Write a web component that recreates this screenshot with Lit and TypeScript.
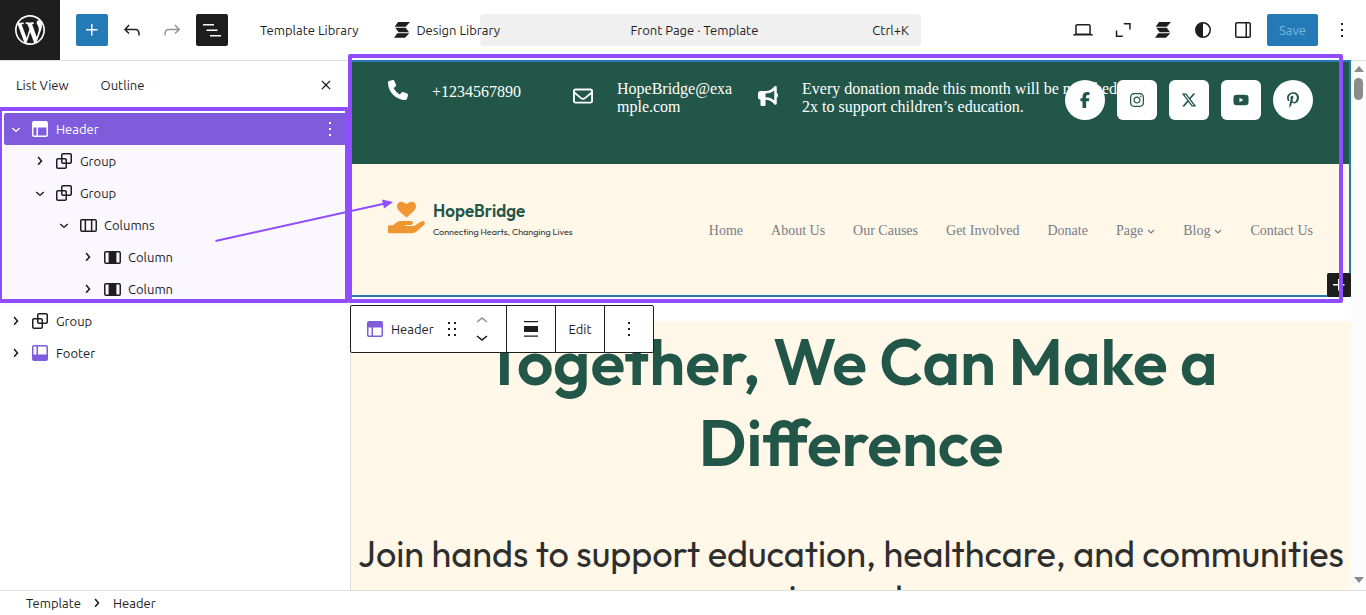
import { LitElement, html, css, svg, nothing } from "lit";
import { customElement } from "lit/decorators.js";

const icon = (body: unknown, size = 24, box = "0 0 24 24") =>
  html`<svg width=${size} height=${size} viewBox=${box} fill="currentColor" aria-hidden="true">${body}</svg>`;

const I = {
  plus: svg`<path d="M11 12.5V17.5H12.5V12.5H17.5V11H12.5V6H11V11H6V12.5H11Z"/>`,
  undo: svg`<path d="M18.3 11.7c-.6-.6-1.4-.9-2.3-.9H6.7l2.9-3.3-1.1-1-4.5 5L8.500 16l1-1-2.700-2.700H16c.5 0 .9.200 1.300.5 1 1 1 3.400 1 4.500v.300h1.500v-.200c0-1.500 0-4.300-1.500-5.700z"/>`,
  redo: svg`<path d="M15.600 6.500l-1.100 1 2.900 3.300H8c-.9 0-1.700.3-2.300.9-1.400 1.500-1.400 4.200-1.400 5.600v.2h1.500v-.300c0-1.100 0-3.500 1-4.500.3-.3.7-.5 1.300-.5h9.200L14.500 15l1.100 1.100 4.600-4.600-4.600-5z"/>`,
  list: svg`<path d="M3 6h11v1.500H3V6Zm3.500 5.500h11V13h-11v-1.500ZM21 17H10v1.500h11V17Z"/>`,
  spectra: svg`<path d="M8 4h12l-4.300 4.700H4.700ZM5.300 9.700h10.400L19 14.300H8.700ZM7.300 15.300h12L15 19.700H4Z"/>`,
  laptop: svg`<path d="M20.500 16h-.7V8c0-1.100-.9-2-2-2H6.200c-1.100 0-2 .9-2 2v8h-.7c-.8 0-1.500.7-1.500 1.500h20c0-.8-.7-1.500-1.500-1.500zM5.700 8c0-.3.2-.5.5-.5h11.600c.3 0 .5.2.5.5v7.600H5.700V8z"/>`,
  expand: svg`<path d="M12.800 5H19.700V11.600H18.200V6.500H12.800ZM4.800 12.400H6.300V17.400H11.800V18.900H4.800Z"/>`,
  contrast: svg`<path fill-rule="evenodd" d="M20 12a8 8 0 1 1-16 0 8 8 0 0 1 16 0Zm-1.500 0A6.500 6.500 0 0 0 12 5.500v13a6.500 6.500 0 0 0 6.500-6.500Z"/>`,
  sidebar: svg`<path fill-rule="evenodd" d="M18 4H6c-1.100 0-2 .9-2 2v12c0 1.100.9 2 2 2h12c1.100 0 2-.9 2-2V6c0-1.100-.9-2-2-2zM14.500 18.500H6c-.3 0-.5-.2-.5-.5V6c0-.3.2-.5.5-.5h8.500v13zm4-.5c0 .3-.2.5-.5.500h-2v-13h2c.3 0 .5.2.5.5v12z"/>`,
  more: svg`<path d="M13 19h-2v-2h2v2zm0-6h-2v-2h2v2zm0-6h-2V5h2v2z"/>`,
  close: svg`<path d="m13.060 12 4.470-4.470-1.060-1.060L12 10.940 7.530 6.470 6.470 7.530 10.940 12l-4.470 4.470 1.060 1.060L12 13.060l4.470 4.470 1.060-1.060L13.060 12Z"/>`,
  header: svg`<path fill-rule="evenodd" d="M18.500 10.500H10v8h8a.5.5 0 0 0 .5-.5v-7.500zm-10 0h-3V18a.5.5 0 0 0 .5.5h2.500v-8zM6 4h12a2 2 0 0 1 2 2v12a2 2 0 0 1-2 2H6a2 2 0 0 1-2-2V6a2 2 0 0 1 2-2z"/>`,
  footer: svg`<path fill-rule="evenodd" d="M18 5.500h-8v8h8.500V6a.5.5 0 0 0-.5-.5zm-9.500 8h-3V6a.5.5 0 0 1 .5-.5h2.500v8zM6 4h12a2 2 0 0 1 2 2v12a2 2 0 0 1-2 2H6a2 2 0 0 1-2-2V6a2 2 0 0 1 2-2z"/>`,
  group: svg`<path fill-rule="evenodd" d="M18 4h-7c-1.100 0-2 .9-2 2v3H6c-1.100 0-2 .9-2 2v7c0 1.100.9 2 2 2h7c1.100 0 2-.9 2-2v-3h3c1.100 0 2-.9 2-2V6c0-1.100-.9-2-2-2zm-4.500 14c0 .3-.2.5-.5.5H6c-.3 0-.5-.2-.5-.5v-7c0-.3.2-.5.5-.5h3V13c0 1.100.9 2 2 2h2.500v3zm0-4.500H11c-.3 0-.5-.2-.5-.5v-2.500H13c.3 0 .5.2.5.5v2.500zm5-.5c0 .3-.2.5-.5.5h-3V11c0-1.100-.9-2-2-2h-2.500V6c0-.3.2-.5.5-.5h7c.3 0 .5.2.5.5v7z"/>`,
  columns: svg`<path fill-rule="evenodd" d="M19 6H6c-1.100 0-2 .9-2 2v9c0 1.100.9 2 2 2h13c1.100 0 2-.9 2-2V8c0-1.100-.9-2-2-2zm-4.100 1.500v10h-4.800v-10h4.800zM5.500 17V8c0-.3.2-.5.5-.5h2.600v10H6c-.3 0-.5-.2-.5-.5zm14 0c0 .3-.2.5-.5.5h-2.600v-10H19c.3 0 .5.2.5.5v9z"/>`,
  column: svg`<path fill-rule="evenodd" d="M19 6H6c-1.100 0-2 .9-2 2v9c0 1.100.9 2 2 2h13c1.100 0 2-.9 2-2V8c0-1.100-.9-2-2-2zM5.500 17V8c0-.3.2-.5.5-.5h2.600v10H6c-.3 0-.5-.2-.5-.5zm14 0c0 .3-.2.5-.5.5h-2.600v-10H19c.3 0 .5.2.5.5v9z"/>`,
  down: svg`<path d="M12 13.400 8.800 10.400 7.800 11.500 12 15.300 16.200 11.500 15.200 10.400Z"/>`,
  wide: svg`<path d="M17.500 11.600 12 16l-5.500-4.400.9-1.200L12 14l4.500-3.600 1 1.200z"/>`,
  right: svg`<path d="m10.700 7.600 3.800 4.300-3.800 4.300-1.200-1 2.900-3.300-2.900-3.300Z"/>`,
  drag: svg`<path d="M8 7h2V5H8v2zm0 6h2v-2H8v2zm0 6h2v-2H8v2zm6-14v2h2V5h-2zm0 8h2v-2h-2v2zm0 6h2v-2h-2v2z"/>`,
  align: svg`<path d="M5 4h14v1.300H5ZM5 9h14v6H5ZM5 18.500h14v1.300H5Z"/>`,
  phone: svg`<path d="M164.900 24.600c-7.700-18.600-28-28.500-47.400-23.200l-88 24C12.100 30.200 0 46 0 64c0 247.400 200.600 448 448 448 18 0 33.800-12.100 38.600-29.500l24-88c5.300-19.400-4.600-39.700-23.200-47.400l-96-40c-16.300-6.800-35.200-2.100-46.300 11.600L304.700 368C234.300 334.700 177.300 277.700 144 207.300l49.300-40.300c13.700-11.200 18.400-30 11.600-46.300l-40-96z"/>`,
  mail: svg`<path d="M64 112c-8.800 0-16 7.200-16 16v22.100L220.500 291.700c20.700 17 50.400 17 71.100 0L464 150.100V128c0-8.800-7.200-16-16-16H64zM48 212.200V384c0 8.800 7.200 16 16 16H448c8.800 0 16-7.200 16-16V212.200L322 328.800c-38.400 31.500-93.700 31.500-132 0L48 212.200zM0 128C0 92.700 28.700 64 64 64H448c35.300 0 64 28.700 64 64V384c0 35.300-28.700 64-64 64H64c-35.300 0-64-28.700-64-64V128z"/>`,
  horn: svg`<path d="M480 32c0-12.900-7.800-24.600-19.800-29.600s-25.700-2.200-34.900 6.900L381.700 53c-48 48-113.100 75-181 75H192 160 64c-35.300 0-64 28.700-64 64v96c0 35.300 28.700 64 64 64l0 128c0 17.700 14.300 32 32 32h64c17.700 0 32-14.300 32-32V352l8.700 0c67.900 0 133 27 181 75l43.600 43.600c9.200 9.200 22.900 11.900 34.900 6.900s19.800-16.600 19.800-29.600V300.400c18.600-8.800 32-32.500 32-60.400s-13.400-51.600-32-60.400V32zm-64 76.700V240 371.300C357.200 317.800 280.500 288 200.700 288H192V192h8.700c79.800 0 156.500-29.800 215.300-83.300z"/>`,
  fb: svg`<path d="M80 299.300V512H196V299.300h86.500l18-97.800H196V166.900c0-51.700 20.300-71.500 72.700-71.500 16.300 0 29.400.4 37 1.200V7.900C291.400 4 256.400 0 236.200 0 129.300 0 80 50.500 80 159.400v42.100H14v97.800H80z"/>`,
  ig: svg`<path d="M224.100 141c-63.600 0-114.900 51.300-114.900 114.900s51.300 114.900 114.900 114.900S339 319.500 339 255.900 287.700 141 224.100 141zm0 189.600c-41.100 0-74.700-33.500-74.700-74.700s33.500-74.700 74.700-74.700 74.700 33.500 74.700 74.700-33.600 74.700-74.700 74.700zm146.400-194.300c0 14.900-12 26.800-26.800 26.800-14.900 0-26.800-12-26.800-26.800s12-26.800 26.800-26.800 26.800 12 26.800 26.800zm76.100 27.200c-1.700-35.900-9.900-67.700-36.200-93.900-26.200-26.200-58-34.400-93.900-36.200-37-2.100-147.900-2.100-184.900 0-35.800 1.700-67.600 9.900-93.900 36.100s-34.400 58-36.200 93.900c-2.100 37-2.100 147.900 0 184.900 1.700 35.900 9.900 67.700 36.200 93.900s58 34.400 93.900 36.200c37 2.100 147.900 2.100 184.900 0 35.900-1.700 67.700-9.900 93.900-36.200 26.200-26.200 34.400-58 36.200-93.900 2.100-37 2.100-147.800 0-184.800zM398.800 388c-7.800 19.600-22.900 34.700-42.600 42.600-29.500 11.700-99.500 9-132.100 9s-102.700 2.600-132.100-9c-19.600-7.800-34.700-22.900-42.600-42.600-11.700-29.500-9-99.500-9-132.100s-2.600-102.700 9-132.100c7.800-19.600 22.900-34.700 42.600-42.600 29.500-11.700 99.500-9 132.100-9s102.700-2.600 132.100 9c19.600 7.800 34.700 22.900 42.600 42.600 11.700 29.500 9 99.500 9 132.100s2.700 102.700-9 132.100z"/>`,
  x: svg`<path d="M389.200 48h70.600L305.600 224.200 487 464H345L233.700 318.600 106.500 464H35.800L200.700 275.500 26.800 48H172.400L272.900 180.900 389.200 48zM364.400 421.800h39.100L151.100 88h-42L364.400 421.800z"/>`,
  yt: svg`<path d="M549.700 124.100c-6.300-23.700-24.800-42.300-48.300-48.600C458.800 64 288 64 288 64S117.200 64 74.600 75.500c-23.500 6.300-42 24.900-48.300 48.600-11.400 42.900-11.400 132.300-11.400 132.300s0 89.400 11.400 132.300c6.300 23.700 24.800 41.500 48.300 47.800C117.200 448 288 448 288 448s170.800 0 213.400-11.500c23.500-6.300 42-24.200 48.300-47.800 11.400-42.900 11.400-132.300 11.400-132.300s0-89.400-11.400-132.300zM232.100 337.600V175.200l142.700 81.200-142.700 81.200z"/>`,
  pin: svg`<path d="M204 6.500C101.400 6.500 0 74.900 0 185.600 0 256 39.600 296 63.600 296c9.900 0 15.600-27.600 15.600-35.400 0-9.300-23.700-29.100-23.700-67.800 0-80.400 61.200-137.400 140.400-137.400 68.100 0 118.500 38.700 118.500 109.800 0 53.100-21.300 152.700-90.300 152.700-24.900 0-46.200-18-46.200-43.800 0-37.800 26.400-74.400 26.400-113.400 0-66.200-93.900-54.200-93.900 25.800 0 16.800 2.100 35.400 9.600 50.700-13.800 59.400-42 147.900-42 209.100 0 18.900 2.700 37.500 4.500 56.400 3.400 3.800 1.700 3.400 6.900 1.500 50.400-69 48.600-82.500 71.400-172.800 12.300 23.400 44.100 36 69.300 36 106.200 0 153.900-103.500 153.900-196.800C384 71.300 298.200 6.500 204 6.500z"/>`,
  wp: svg`<path d="M20 10c0-5.510-4.490-10-10-10C4.480 0 0 4.490 0 10c0 5.520 4.480 10 10 10 5.510 0 10-4.480 10-10zM7.780 15.370L4.370 6.220c.55-.02 1.170-.08 1.170-.08.5-.06.44-1.130-.06-1.110 0 0-1.450.11-2.370.11-.18 0-.37 0-.58-.01C4.120 2.690 6.870 1.110 10 1.110c2.330 0 4.450.87 6.050 2.340-.68-.11-1.650.39-1.650 1.580 0 .74.45 1.360.9 2.100.35.61.55 1.360.55 2.460 0 1.490-1.400 5-1.400 5l-3.030-8.370c.54-.02.82-.17.82-.17.5-.05.44-1.250-.06-1.220 0 0-1.440.12-2.380.12-.87 0-2.330-.12-2.330-.12-.5-.03-.56 1.200-.06 1.220l.92.08 1.260 3.410zM17.410 10c.24-.64.74-1.870.43-4.250.7 1.290 1.050 2.710 1.050 4.250 0 3.290-1.730 6.240-4.400 7.780.97-2.590 1.940-5.200 2.920-7.780zM6.100 18.090C3.120 16.650 1.110 13.530 1.110 10c0-1.300.23-2.480.72-3.590C3.250 10.300 4.670 14.200 6.100 18.090zm4.030-6.630l2.580 6.980c-.86.29-1.760.45-2.710.45-.79 0-1.570-.11-2.290-.33.81-2.380 1.620-4.740 2.420-7.100z"/>`,
  brand: svg`<path d="M18.500 17.500C12.500 12.500 9 9.800 9 6.300 9 1 15 .2 18.500 4.200 22 .2 28 1 28 6.300c0 3.500-3.500 6.200-9.500 11.200Z"/><path d="M0 26.500Q0 25.200 1.300 25.200H4.800L8.600 22.400Q10.500 21 12.500 21H23Q25 21 25 22.900T23 24.900H17.500V26H26L33.200 21.500Q35 20.300 36.300 21.700T36 25L28.500 31.500Q26.500 33.300 24 33.300H1.300Q0 33.300 0 32Z"/>`,
};

const tree = [
  { label: "Header", icon: I.header, depth: 0, open: true, kind: "selected" },
  { label: "Group", icon: I.group, depth: 1, open: false, kind: "branch" },
  { label: "Group", icon: I.group, depth: 1, open: true, kind: "branch" },
  { label: "Columns", icon: I.columns, depth: 2, open: true, kind: "branch" },
  { label: "Column", icon: I.column, depth: 3, open: false, kind: "branch" },
  { label: "Column", icon: I.column, depth: 3, open: false, kind: "branch" },
  { label: "Group", icon: I.group, depth: 0, open: false, kind: "" },
  { label: "Footer", icon: I.footer, depth: 0, open: false, kind: "part" },
];

const shared = css`
  *, *::before, *::after { box-sizing: border-box; }
  button { font: inherit; color: inherit; background: none; border: 0; padding: 0; margin: 0; display: inline-flex; align-items: center; justify-content: center; }
  a { color: inherit; text-decoration: none; }
  svg { display: block; flex: none; }
`;

@customElement("editor-topbar")
class EditorTopbar extends LitElement {
  static styles = [shared, css`
    :host { display: block; }
    .bar { position: relative; display: flex; align-items: center; height: 60px; background: #fff; }
    .logo { width: 60px; height: 60px; background: #1e1e1e; color: #fff; display: flex; align-items: center; justify-content: center; }
    .tools { display: flex; align-items: center; gap: 8px; margin-left: 16px; }
    .tool { width: 32px; height: 32px; border-radius: 2px; }
    .add { background: #237ab7; color: #fff; }
    .faded { color: #949494; }
    .dark { background: #1e1e1e; color: #fff; }
    .libs { position: relative; z-index: 1; display: flex; gap: 32px; margin-left: 32px; }
    .lib { gap: 2px; }
    .command { position: absolute; left: 480px; right: 445px; top: 14px; height: 32px; display: grid; grid-template-columns: 1fr auto 1fr; padding: 0 12px 0 0; background: #f0f0f0; border-radius: 4px; align-items: center; }
    .title { grid-column: 2; }
    .keys { justify-self: end; }
    .actions { display: flex; align-items: center; gap: 8px; margin-left: auto; }
    .save { height: 32px; padding: 0 12px; border-radius: 2px; background: #237ab7; color: #7cb6dc; }
    .more { width: 32px; height: 32px; margin-right: 8px; }
  `];
  render() {
    return html`<header class="bar">
      <a class="logo" href="#" aria-label="Dashboard">${icon(I.wp, 36, "-2 -2 24 24")}</a>
      <div class="tools">
        <button class="tool add" aria-label="Add block">${icon(I.plus)}</button>
        <button class="tool" aria-label="Undo">${icon(I.undo)}</button>
        <button class="tool faded" aria-label="Redo">${icon(I.redo)}</button>
        <button class="tool dark" aria-label="Document overview">${icon(I.list)}</button>
      </div>
      <div class="libs">
        <button class="lib">Template Library</button>
        <button class="lib">${icon(I.spectra)}Design Library</button>
      </div>
      <button class="command"><span class="title">Front Page · Template</span><span class="keys">Ctrl+K</span></button>
      <div class="actions">
        <button class="tool" aria-label="View">${icon(I.laptop)}</button>
        <button class="tool" aria-label="Zoom out">${icon(I.expand)}</button>
        <button class="tool" aria-label="Page settings">${icon(I.spectra)}</button>
        <button class="tool" aria-label="Styles">${icon(I.contrast)}</button>
        <button class="tool" aria-label="Settings">${icon(I.sidebar)}</button>
        <button class="save">Save</button>
        <button class="more" aria-label="Options">${icon(I.more)}</button>
      </div>
    </header>`;
  }
}

@customElement("list-view")
class ListView extends LitElement {
  static styles = [shared, css`
    :host { display: block; background: #fff; border-top: 1px solid #e0e0e0; }
    .tabs { display: flex; align-items: center; height: 48px; padding: 0 14px 0 16px; }
    .tab { margin-right: 32px; }
    .close { margin-left: auto; }
    .tree { list-style: none; margin: 0; padding: 4px 2px 0 4px; }
    .row { display: flex; align-items: center; height: 32px; padding-right: 6px; }
    .indent { flex: none; width: calc(var(--depth) * 24px); }
    .selected { background: #7f5cdc; color: #fff; border-radius: 2px; }
    .branch { background: #faf7ff; }
    .glyph { color: inherit; margin-right: 4px; }
    .part .glyph { color: #7f5cdc; }
    .name { flex: 1; }
  `];
  render() {
    return html`<div class="tabs">
        <button class="tab">List View</button><button class="tab">Outline</button>
        <button class="close" aria-label="Close">${icon(I.close, 20)}</button>
      </div>
      <ul class="tree">
        ${tree.map((n) => html`<li class="row ${n.kind}">
          <span class="indent" style="--depth:${n.depth}"></span>
          <button aria-label="Toggle ${n.label}">${icon(n.open ? I.down : I.right)}</button>
          <span class="glyph">${icon(n.icon)}</span>
          <span class="name">${n.label}</span>
          ${n.kind === "selected" ? html`<button aria-label="Options">${icon(I.more)}</button>` : nothing}
        </li>`)}
      </ul>`;
  }
}

@customElement("site-canvas")
class SiteCanvas extends LitElement {
  static styles = [shared, css`
    :host { display: block; position: relative; background: #fff; overflow: hidden; font-family: "Liberation Serif", serif; }
    .part { position: relative; }
    .part::after { content: ""; position: absolute; inset: 0; border: 2px solid #237ab7; pointer-events: none; }
    .top { display: grid; grid-template-columns: 185px 185px minmax(0, 1fr) auto; height: 104px; padding: 20px 38px 0; background: #225649; color: #fff; font-size: 16px; line-height: 18px; }
    .fact { display: grid; grid-template-columns: 24px 1fr; column-gap: 20px; align-items: start; }
    .fact p { margin: 0; overflow-wrap: anywhere; }
    .address { width: 118px; }
    .phone p { padding-top: 3px; }
    .low { padding-top: 6px; }
    .pledge { width: 325px; }
    .social { display: flex; gap: 12px; }
    .chip { width: 40px; height: 40px; border-radius: 6px; background: #fff; color: #225649; display: flex; align-items: center; justify-content: center; position: relative; }
    .round { border-radius: 50%; }
    .bottom { display: flex; align-items: center; height: 133px; padding: 0 38px; background: #fff7e8; }
    .brand { display: flex; align-items: center; gap: 8px; margin-top: -24px; color: #f09733; }
    .brand-text { padding-top: 4px; }
    .brand-name { font: 600 17px/22px Outfit, Lato, sans-serif; color: #225649; }
    .tagline { font: 400 9px/20px Outfit, Lato, sans-serif; color: #333; }
    .nav { display: flex; gap: 28px; margin-left: auto; color: #7a7c86; font-size: 14px; line-height: 20px; }
    .nav a { display: flex; align-items: center; gap: 4px; }
    .appender { position: absolute; right: 0; bottom: 0; z-index: 1; width: 24px; height: 24px; background: #1e1e1e; color: #fff; border-radius: 2px; }
    .rest { padding-top: 24px; border-left: 1px solid #ddd; }
    .hero { background: #fff7e8; text-align: center; font-family: Outfit, Lato, sans-serif; }
    h1 { margin: 0; font-size: 64px; line-height: 81px; font-weight: 600; color: #225649; }
    .lead { margin: 48px 0 0; font-size: 36px; line-height: 45px; color: #2e2e2e; }
    .toolbar { position: absolute; left: 0; top: 245px; display: flex; height: 48px; border: 1px solid #1e1e1e; border-radius: 2px; background: #fff; font: 13px/20px Ubuntu, "Noto Sans", sans-serif; color: #1e1e1e; }
    .seg { display: flex; align-items: center; justify-content: center; border-left: 1px solid #1e1e1e; width: 49px; }
    .seg:first-child { border: 0; width: 155px; justify-content: flex-start; padding-left: 12px; }
    .name { gap: 4px; }
    .purple { color: #7f5cdc; }
    .drag { margin-left: 6px; }
    .movers { display: flex; flex-direction: column; margin-left: 6px; }
    .up { transform: rotate(180deg); color: #949494; }
    .movers button { height: 16px; overflow: hidden; }
  `];
  render() {
    const menu = ["Home", "About Us", "Our Causes", "Get Involved", "Donate", "Page", "Blog", "Contact Us"];
    return html`<div class="part">
        <div class="top">
          <div class="fact phone">${icon(I.phone, 20, "0 0 512 512")}<p>+1234567890</p></div>
          <div class="fact">
            <span class="low">${icon(I.mail, 20, "0 0 512 512")}</span><p class="address">HopeBridge@example.com</p>
          </div>
          <div class="fact">
            <span class="low">${icon(I.horn, 20, "0 0 512 512")}</span><p class="pledge">Every donation made this month will be matched 2x to support children’s education.</p>
          </div>
          <div class="social">
            <a class="chip round" href="#" aria-label="Facebook">${icon(I.fb, 16, "0 0 320 512")}</a>
            <a class="chip" href="#" aria-label="Instagram">${icon(I.ig, 16, "0 0 448 512")}</a>
            <a class="chip" href="#" aria-label="X">${icon(I.x, 16, "0 0 512 512")}</a>
            <a class="chip" href="#" aria-label="YouTube">${icon(I.yt, 16, "0 0 576 512")}</a>
            <a class="chip round" href="#" aria-label="Pinterest">${icon(I.pin, 16, "0 0 384 512")}</a>
          </div>
        </div>
        <div class="bottom">
          <a class="brand" href="#">${icon(I.brand, 37, "0 0 37 37")}
            <div class="brand-text"><div class="brand-name">HopeBridge</div><div class="tagline">Connecting Hearts, Changing Lives</div></div>
          </a>
          <nav class="nav">${menu.map((m) => html`<a href="#">${m}${m === "Page" || m === "Blog"
            ? html`<svg width="8" height="8" viewBox="0 0 8 8" fill="none" stroke="currentColor" stroke-width="1.2"><path d="M1 3l3 3 3-3"/></svg>` : nothing}</a>`)}</nav>
        </div>
        <button class="appender" aria-label="Add block">${icon(I.plus)}</button>
      </div>
      <div class="rest">
        <section class="hero">
          <h1>Together, We Can Make a<br>Difference</h1>
          <p class="lead">Join hands to support education, healthcare, and communities in need.</p>
        </section>
      </div>
      <div class="toolbar">
        <div class="seg">
          <button class="name"><span class="purple">${icon(I.header)}</span>Header</button>
          <button class="drag" aria-label="Drag">${icon(I.drag)}</button>
          <div class="movers">
            <button class="up" aria-label="Move up">${icon(I.wide)}</button>
            <button aria-label="Move down">${icon(I.wide)}</button>
          </div>
        </div>
        <button class="seg" aria-label="Align">${icon(I.align)}</button>
        <button class="seg">Edit</button>
        <button class="seg" aria-label="Options">${icon(I.more)}</button>
      </div>`;
  }
}

@customElement("app-root")
class AppRoot extends LitElement {
  static styles = [shared, css`
    :host { display: flex; flex-direction: column; position: relative; height: 100vh; overflow: hidden; background: #fff; color: #1e1e1e; font: 13px/20px Ubuntu, "Noto Sans", sans-serif; }
    .body { display: grid; grid-template-columns: 350px 1fr 15px; flex: 1; min-height: 0; }
    .scroll { display: flex; flex-direction: column; align-items: center; padding: 5px 0 7px; border-top: 1px solid #e0e0e0; background: #fcfcfc; color: #8b8b8b; }
    .thumb { width: 9px; height: 22px; margin-top: 6px; border-radius: 5px; background: #8b8b8b; }
    .end { margin-top: auto; }
    .crumbs { display: flex; align-items: center; height: 25px; padding: 0 26px; border-top: 1px solid #e0e0e0; gap: 4px; background: #fff; }
    .mark { position: absolute; border: 4px solid #904dff; pointer-events: none; z-index: 3; }
    .mark-tree { left: -2px; top: 107px; width: 351px; height: 196px; border-radius: 2px; }
    .mark-site { left: 348px; right: 23px; top: 54px; height: 249px; border-radius: 2px; }
    .arrow { position: absolute; left: 210px; top: 195px; z-index: 4; pointer-events: none; }
  `];
  render() {
    return html`<editor-topbar></editor-topbar>
      <main class="body">
        <list-view></list-view>
        <site-canvas></site-canvas>
        <div class="scroll">
          <svg width="10" height="6" viewBox="0 0 10 6" fill="currentColor"><path d="M0 6 5 0l5 6z"/></svg>
          <div class="thumb"></div>
          <svg class="end" width="10" height="6" viewBox="0 0 10 6" fill="currentColor"><path d="M0 0h10L5 6z"/></svg>
        </div>
      </main>
      <footer class="crumbs"><a href="#">Template</a>${icon(I.right)}<span>Header</span></footer>
      <div class="mark mark-tree"></div>
      <div class="mark mark-site"></div>
      <svg class="arrow" width="190" height="50" viewBox="0 0 190 50" fill="#904dff"><path d="M5.500 46 175 8.500" stroke="#904dff" stroke-width="2"/><path d="M172 4.500 183 7l-9 6.500z"/></svg>`;
  }
}
